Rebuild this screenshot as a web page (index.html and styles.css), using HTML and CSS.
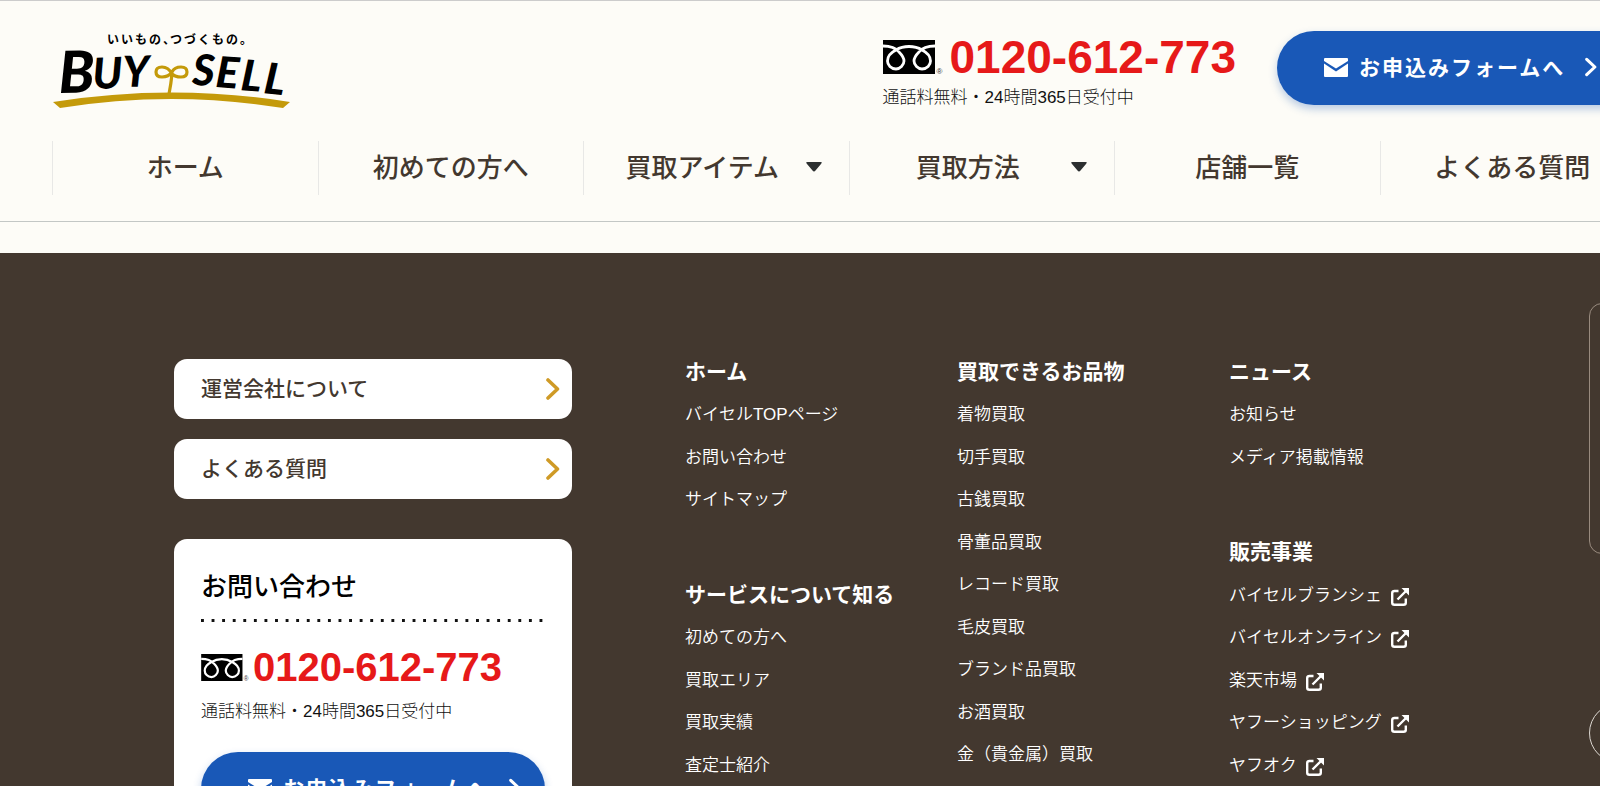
FILE: index.html
```html
<!DOCTYPE html>
<html lang="ja">
<head>
<meta charset="utf-8">
<title>バイセル</title>
<link rel="stylesheet" href="styles.css">
</head>
<body>
<svg class="defs" aria-hidden="true">
  <symbol id="dial" viewBox="0 0 60 34">
    <rect width="52" height="34" fill="#000"/>
    <path d="M0 6C7 6 12 7 16 12C20 16 21 18 21 21C21 25 17 29 13 29C8 29 4.500 25 4.500 21C4.500 16 9 12 13 10C17 7.500 21 6.500 26 6.500C31 6.500 35 7.500 39 10C43 12 47.500 16 47.500 21C47.500 25 44 29 39 29C35 29 31 25 31 21C31 18 32 16 36 12C40 7 45 6 52 6" fill="none" stroke="#fff" stroke-width="2.800"/>
    <text x="53.500" y="34" font-size="8" fill="#333">®</text>
  </symbol>
  <symbol id="mail" viewBox="0 0 24 19">
    <path d="M1 0H23Q24 0 24 1V3L12 10.500L0 3V1Q0 0 1 0Z" fill="#fff"/>
    <path d="M0 5.500L12 13.500L24 5.500V18Q24 19 23 19H1Q0 19 0 18Z" fill="#fff"/>
  </symbol>
  <symbol id="chevron" viewBox="0 0 14 22">
    <path d="M2 2L11.500 11L2 20" fill="none" stroke="currentColor" stroke-width="3.600" stroke-linecap="round" stroke-linejoin="round"/>
  </symbol>
  <symbol id="external" viewBox="0 0 18 18">
    <path d="M7.500 3H3.500Q1.200 3 1.200 5V14.800Q1.200 16.800 3.500 16.800H12.500Q14.800 16.800 14.800 14.800V10.500M6.500 11.500L15 3" fill="none" stroke="#fff" stroke-width="2.400"/>
    <path d="M10.500 0H18V7.500Z" fill="#fff"/>
  </symbol>
</svg>
<div class="page">
  <header class="header">
    <div class="header-main">
      <a class="logo" href="#" aria-label="バイセル">
        <svg width="239" height="77" viewBox="-1 0 239 77">
          <text class="logo-tag" y="12" x="54 68 82 96 110 117 131 145 159 173 187">いいもの、つづくもの。</text>
          <text class="logo-word logo-initial" x="6" y="61" rotate="-1">B</text>
          <text class="logo-word" x="40 70" y="57 55" rotate="-2 -1">UY</text>
          <text class="logo-word" x="139 162 187 210" y="53 55 58 61" rotate="2 4 5 6">SELL</text>
          <path d="M119 42C116 36 112 35 109 35C105 35 103 37 103 40C103 43 105 45 109 45C114 45 117 43 119 40C121 36 124 35 128 35C132 35 134 37 134 40C134 43 132 45 128 45C124 45 120 43 119 42Q118 52 116 62" fill="none" stroke="#c49a0a" stroke-width="3.200"/>
          <path d="M0 70Q118.500 51 237 70L230 76Q118.500 58 7 76Z" fill="#c49a0a"/>
        </svg>
      </a>
      <div class="phone">
        <a class="phone-line" href="tel:0120612773"><svg class="dial" width="60" height="34"><use href="#dial"/></svg><span class="phone-number">0120-612-773</span></a>
        <p class="phone-note">通話料無料・24時間365日受付中</p>
      </div>
      <a class="cta" href="#"><svg width="24" height="19"><use href="#mail"/></svg><span class="cta-text">お申込みフォームへ</span><svg width="12" height="20"><use href="#chevron"/></svg></a>
    </div>
    <nav class="nav">
      <a href="#">ホーム</a>
      <a href="#">初めての方へ</a>
      <a class="has-menu" href="#">買取アイテム<svg width="16" height="10" viewBox="0 0 16 10"><path d="M1.500 0H14.500Q17 0 15 2L9.500 8.500Q8 10.500 6.500 8.500L1 2Q-1 0 1.500 0Z"/></svg></a>
      <a class="has-menu" href="#">買取方法<svg width="16" height="10" viewBox="0 0 16 10"><path d="M1.500 0H14.500Q17 0 15 2L9.500 8.500Q8 10.500 6.500 8.500L1 2Q-1 0 1.500 0Z"/></svg></a>
      <a href="#">店舗一覧</a>
      <a href="#">よくある質問</a>
    </nav>
  </header>
  <footer class="footer">
    <div class="side">
      <a class="pill" href="#">運営会社について<svg width="14" height="22"><use href="#chevron"/></svg></a>
      <a class="pill" href="#">よくある質問<svg width="14" height="22"><use href="#chevron"/></svg></a>
      <section class="contact">
        <h2>お問い合わせ</h2>
        <div class="dots"></div>
        <a class="phone-line" href="tel:0120612773"><svg class="dial" width="48" height="27"><use href="#dial"/></svg><span class="phone-number">0120-612-773</span></a>
        <p class="phone-note">通話料無料・24時間365日受付中</p>
        <a class="cta" href="#"><svg width="24" height="19"><use href="#mail"/></svg><span class="cta-text">お申込みフォームへ</span><svg width="12" height="20"><use href="#chevron"/></svg></a>
      </section>
    </div>
    <div class="links">
      <div class="column">
        <section>
          <h3>ホーム</h3>
          <ul>
            <li><a href="#">バイセルTOPページ</a></li>
            <li><a href="#">お問い合わせ</a></li>
            <li><a href="#">サイトマップ</a></li>
          </ul>
        </section>
        <section>
          <h3>サービスについて知る</h3>
          <ul>
            <li><a href="#">初めての方へ</a></li>
            <li><a href="#">買取エリア</a></li>
            <li><a href="#">買取実績</a></li>
            <li><a href="#">査定士紹介</a></li>
          </ul>
        </section>
      </div>
      <div class="column">
        <section>
          <h3>買取できるお品物</h3>
          <ul>
            <li><a href="#">着物買取</a></li>
            <li><a href="#">切手買取</a></li>
            <li><a href="#">古銭買取</a></li>
            <li><a href="#">骨董品買取</a></li>
            <li><a href="#">レコード買取</a></li>
            <li><a href="#">毛皮買取</a></li>
            <li><a href="#">ブランド品買取</a></li>
            <li><a href="#">お酒買取</a></li>
            <li><a href="#">金（貴金属）買取</a></li>
          </ul>
        </section>
      </div>
      <div class="column">
        <section>
          <h3>ニュース</h3>
          <ul>
            <li><a href="#">お知らせ</a></li>
            <li><a href="#">メディア掲載情報</a></li>
          </ul>
        </section>
        <section>
          <h3>販売事業</h3>
          <ul>
            <li><a href="#">バイセルブランシェ<svg width="18" height="18"><use href="#external"/></svg></a></li>
            <li><a href="#">バイセルオンライン<svg width="18" height="18"><use href="#external"/></svg></a></li>
            <li><a href="#">楽天市場<svg width="18" height="18"><use href="#external"/></svg></a></li>
            <li><a href="#">ヤフーショッピング<svg width="18" height="18"><use href="#external"/></svg></a></li>
            <li><a href="#">ヤフオク<svg width="18" height="18"><use href="#external"/></svg></a></li>
          </ul>
        </section>
      </div>
    </div>
    <div class="floating">
      <div class="floating-panel"></div>
      <a class="floating-circle" href="#" aria-label="ページトップへ"></a>
    </div>
  </footer>
</div>
</body>
</html>
```
FILE: styles.css
```css
* { box-sizing: border-box; }

html { overflow: hidden; }

body {
  margin: 0;
  background: #fdfcf7;
  color: #43382f;
  font-family: "Liberation Sans", "Noto Sans CJK JP", sans-serif;
  font-size: 17px;
}

a { color: inherit; text-decoration: none; }
h2, h3, p, ul { margin: 0; padding: 0; }
ul { list-style: none; }
svg { display: block; flex: none; }
.defs { position: absolute; width: 0; height: 0; }

.page { min-width: 1698px; }

/* Header */
.header {
  padding: 30px 53px 26px 52px;
  border-top: 1px solid #ccc;
  border-bottom: 1px solid #c3c7c5;
}

.header-main {
  display: flex;
  align-items: flex-start;
  gap: 41px;
  height: 74px;
}

.logo { margin-right: auto; padding-top: 1px; }
.logo svg { overflow: visible; }

.logo-tag { font: 700 12px "Noto Sans CJK JP", sans-serif; fill: #000; }
.logo-word { font: italic 900 43px Lato, sans-serif; fill: #000; }
.logo-initial { font-size: 58px; }

.phone { padding-top: 3px; }
.phone-line { display: flex; align-items: center; gap: 7px; }
.phone-number { color: #e61919; font-size: 46px; font-weight: 700; line-height: 46px; }
.phone-note { margin-top: 5px; color: #111; font-weight: 200; line-height: 26px; }

.cta {
  display: flex;
  align-items: center;
  width: 368px;
  height: 74px;
  padding: 0 0 2px 47px;
  border-radius: 37px;
  background: #1958b7;
  box-shadow: 0 4px 8px rgba(25, 88, 183, .3);
  color: #fff;
}

.cta-text {
  margin: 0 20px 3px 11px;
  font-size: 21px;
  font-weight: 700;
  letter-spacing: 2px;
}

.nav {
  display: grid;
  grid-template-columns: repeat(6, 1fr);
  margin-top: 36px;
}

.nav a {
  position: relative;
  display: flex;
  align-items: center;
  justify-content: center;
  height: 54px;
  padding-bottom: 6px;
  border-left: 1px solid #e8e8e6;
  font-size: 26px;
  font-weight: 500;
}

.nav a:last-child { border-right: 1px solid #e8e8e6; }
.nav .has-menu { padding-right: 28px; }
.nav svg { position: absolute; top: 21px; right: 27px; fill: #2c2f30; }

/* Footer */
.footer {
  position: relative;
  display: flex;
  gap: 113px;
  margin-top: 31px;
  padding: 106px 174px;
  background: #43382f;
}

.side { flex: none; width: 398px; }

.pill {
  display: flex;
  align-items: center;
  justify-content: space-between;
  height: 60px;
  margin-bottom: 20px;
  padding: 0 12px 4px 27px;
  border-radius: 13px;
  background: #fff;
  font-size: 21px;
  font-weight: 500;
}

.pill svg { margin-top: 4px; color: #cf9a26; }

.contact {
  margin-top: 40px;
  padding: 29px 27px;
  border-radius: 13px;
  background: #fff;
}

.contact h2 { color: #000; font-size: 26px; font-weight: 500; line-height: 39px; }

.dots {
  height: 3px;
  margin: 12px 0 25px;
  background: linear-gradient(90deg, #111 3px, transparent 3px) 0 0 / calc(100% / 32.5) 3px;
}

.contact .phone-line { gap: 4px; }
.contact .phone-number { font-size: 40px; line-height: 40px; }
.contact .phone-note { margin-top: 12px; }
.contact .cta { width: 100%; margin-top: 27px; }

.links { display: flex; color: #fff; }
.column { display: flex; flex-direction: column; gap: 69px; width: 272px; }
.column h3 { margin-bottom: 17px; font-size: 21px; font-weight: 700; line-height: 1.25; }
.column ul { display: flex; flex-direction: column; gap: 17px; font-weight: 350; line-height: 1.5; }
.column a { display: flex; align-items: center; gap: 9px; }
.column svg { margin-top: 3px; }

/* Floating panel over the right edge */
.floating { position: absolute; top: 50px; right: 0; width: 109px; }
.floating-panel { height: 251px; border: 1px solid #998b7f; border-radius: 13px; }
.floating-circle {
  display: block;
  width: 60px;
  height: 60px;
  margin-top: 149px;
  border: 1px solid #ddd8d2;
  border-radius: 50%;
}
```
